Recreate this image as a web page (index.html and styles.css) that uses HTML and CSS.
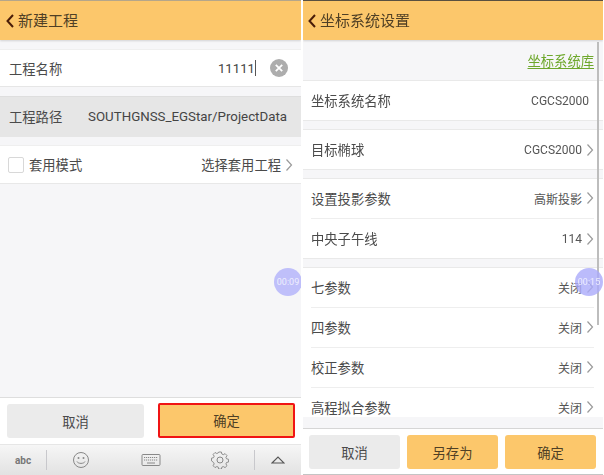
FILE: index.html
```html
<!DOCTYPE html>
<html lang="zh">
<head>
<meta charset="utf-8">
<title>新建工程</title>
<link rel="stylesheet" href="styles.css">
</head>
<body>
<div class="app">
  <section class="panel panel-left">
    <header class="topbar">
      <svg class="back" viewBox="0 0 10 16"><path d="M8 2 2.500 8 8 14" /></svg>
      <h1>新建工程</h1>
    </header>
    <main class="content">
      <div class="row row-name">
        <span class="label">工程名称</span>
        <span class="input-value">11111<i class="caret"></i></span>
        <svg class="clear" viewBox="0 0 18 18"><circle cx="9" cy="9" r="9"/><path d="M5.800 5.800 12.200 12.200M12.200 5.800 5.800 12.200"/></svg>
      </div>
      <div class="row row-path">
        <span class="label">工程路径</span>
        <span class="path">SOUTHGNSS_EGStar/ProjectData</span>
      </div>
      <div class="row row-mode">
        <span class="check"></span>
        <span class="label">套用模式</span>
        <span class="value value-dark">选择套用工程</span>
        <svg class="chev" viewBox="0 0 8 14"><path d="M1.500 1.500 6.500 7 1.500 12.500"/></svg>
      </div>
    </main>
    <footer class="actions actions-left">
      <button class="btn btn-grey">取消</button>
      <button class="btn btn-gold btn-marked">确定</button>
    </footer>
    <nav class="keyboard">
      <span class="kb-abc">abc</span>
      <span class="kb-sep"></span>
      <span class="kb-icons">
        <svg class="kb-icon" viewBox="0 0 18 18"><circle cx="9" cy="9" r="7.500"/><circle cx="6.500" cy="7" r="1" class="solid"/><circle cx="11.500" cy="7" r="1" class="solid"/><path d="M5 10.500c1 2.500 7 2.500 8 0"/></svg>
        <svg class="kb-icon kb-board" viewBox="0 0 20 14"><rect x="1" y="1.500" width="18" height="11" rx="1"/><path d="M3 4.500h14M3 7h14" stroke-dasharray="1.200 .8"/><path d="M6 10h8"/></svg>
        <svg class="kb-icon" viewBox="0 0 18 18"><path d="M7.600 1.500h2.800l.5 2.100 1.500.7 1.900-1.100 2 2-1.100 1.900.6 1.500 2.200.6v2.800l-2.200.5-.6 1.500 1.100 1.900-2 2-1.900-1.100-1.500.6-.5 2.100H7.600l-.5-2.100-1.500-.6-1.900 1.100-2-2 1.100-1.900-.6-1.500L0 10.800V8l2.200-.6.600-1.500L1.700 4l2-2 1.900 1.100 1.500-.7z" transform="translate(.5 -.4) scale(.95)"/><circle cx="9" cy="9" r="3"/></svg>
      </span>
      <span class="kb-sep"></span>
      <svg class="kb-up" viewBox="0 0 14 8"><path d="M1 7 7 1l6 6z"/></svg>
    </nav>
    <span class="timer timer-left">00:09</span>
  </section>

  <section class="panel panel-right">
    <header class="topbar">
      <svg class="back" viewBox="0 0 10 16"><path d="M8 2 2.500 8 8 14" /></svg>
      <h1>坐标系统设置</h1>
    </header>
    <main class="content content-right">
      <div class="scroller">
        <a class="lib-link">坐标系统库</a>
        <div class="group">
          <div class="row"><span class="label">坐标系统名称</span><span class="value value-plain">CGCS2000</span></div>
        </div>
        <div class="group">
          <div class="row"><span class="label">目标椭球</span><span class="value">CGCS2000</span><svg class="chev" viewBox="0 0 8 14"><path d="M1.500 1.500 6.500 7 1.500 12.500"/></svg></div>
        </div>
        <div class="group">
          <div class="row row-line"><span class="label">设置投影参数</span><span class="value">高斯投影</span><svg class="chev" viewBox="0 0 8 14"><path d="M1.500 1.500 6.500 7 1.500 12.500"/></svg></div>
          <div class="row"><span class="label">中央子午线</span><span class="value">114</span><svg class="chev" viewBox="0 0 8 14"><path d="M1.500 1.500 6.500 7 1.500 12.500"/></svg></div>
        </div>
        <div class="group">
          <div class="row row-line"><span class="label">七参数</span><span class="value">关闭</span><svg class="chev" viewBox="0 0 8 14"><path d="M1.500 1.500 6.500 7 1.500 12.500"/></svg></div>
          <div class="row row-line"><span class="label">四参数</span><span class="value">关闭</span><svg class="chev" viewBox="0 0 8 14"><path d="M1.500 1.500 6.500 7 1.500 12.500"/></svg></div>
          <div class="row row-line"><span class="label">校正参数</span><span class="value">关闭</span><svg class="chev" viewBox="0 0 8 14"><path d="M1.500 1.500 6.500 7 1.500 12.500"/></svg></div>
          <div class="row row-line"><span class="label">高程拟合参数</span><span class="value">关闭</span><svg class="chev" viewBox="0 0 8 14"><path d="M1.500 1.500 6.500 7 1.500 12.500"/></svg></div>
        </div>
      </div>
      <span class="scrollbar"></span>
    </main>
    <footer class="actions actions-right">
      <button class="btn btn-grey">取消</button>
      <button class="btn btn-gold">另存为</button>
      <button class="btn btn-gold">确定</button>
    </footer>
    <span class="timer timer-right">00:15</span>
  </section>
</div>
</body>
</html>
```

FILE: styles.css
```css
* { box-sizing: border-box; }
html, body { margin: 0; padding: 0; background: #fff; }
body {
  width: 604px;
  height: 475px;
  overflow: hidden;
  font-family: Roboto, "Noto Sans CJK SC", sans-serif;
  color: #444;
}
.app {
  display: flex;
  width: 604px;
  height: 475px;
  filter: blur(0.35px);
}
.panel {
  position: relative;
  display: flex;
  flex-direction: column;
  height: 475px;
  background: #f6f6f8;
  overflow: hidden;
}
.panel-left {
  width: 301px;
  border-top: 1px solid #b5a68a;
}
.panel-right {
  width: 300px;
  margin-left: 2px;
  border-top: 1px solid #5a5040;
}
.topbar {
  display: flex;
  align-items: center;
  flex: none;
  height: 39px;
  padding-left: 5px;
  background: #fcc76b;
  box-shadow: 0 1px 2px rgba(0, 0, 0, .15);
  position: relative;
  z-index: 1;
}
.panel-right .topbar { padding-left: 4px; }
.topbar h1 {
  margin: 0 0 0 3px;
  font-size: 15px;
  font-weight: 400;
  line-height: 20px;
  color: #4f3f25;
}
.back { width: 10px; height: 16px; }
.back path { fill: none; stroke: #4a1d08; stroke-width: 2; }

.content { flex: 1; min-height: 0; padding-top: 9px; }
.row {
  display: flex;
  align-items: center;
  height: 39px;
  padding: 0 8px 0 9px;
  background: #fff;
  font-size: 13.300px;
}
.label { color: #4a4a4a; white-space: nowrap; }
.row-name {
  height: 38px;
  border-top: 1px solid #efefef;
  border-bottom: 1px solid #e6e6e6;
}
.input-value { margin-left: auto; font-size: 13px; letter-spacing: .1px; color: #444; display: flex; align-items: center; }
.caret { display: block; width: 1px; height: 16px; background: #555; }
.clear { width: 18px; height: 18px; margin: 0 5px 0 14px; flex: none; }
.clear circle { fill: #adadad; }
.clear path { fill: none; stroke: #fff; stroke-width: 1.800; }

.row-path {
  height: 41px;
  margin-top: 9px;
  padding-bottom: 1px;
  background: #e6e6e6;
  border-top: 1px solid #dedede;
}
.path { margin-left: auto; margin-right: 6px; font-size: 13.300px; color: #444; white-space: nowrap; }

.row-mode {
  margin-top: 8px;
  border-top: 1px solid #efefef;
  border-bottom: 1px solid #e8e8e8;
}
.check {
  width: 16px;
  height: 16px;
  margin: 0 5px 0 -1px;
  border: 1px solid #d8d8d8;
  border-radius: 2px;
  background: #fff;
}
.value { margin-left: auto; font-size: 12px; color: #555; white-space: nowrap; }
.value-dark { font-size: 13.300px; color: #4a4a4a; }
.value-plain { margin-right: 5px; }
.chev { width: 8px; height: 14px; margin-left: 4px; flex: none; }
.chev path { fill: none; stroke: #9a9a9a; stroke-width: 1.200; }

.actions { display: flex; flex: none; background: #fff; border-top: 1px solid #dedede; }
.actions-left { height: 47px; padding: 6px 6px 6px 7px; justify-content: space-between; }
.actions-right {
  height: 47px;
  padding: 6px 7px 5px 6px;
  gap: 7px;
  border-top-color: #d6d6d6;
  border-bottom: 1px solid #c4c4c4;
}
.btn {
  font-family: inherit;
  font-size: 13.300px;
  color: #4a4a4a;
  border: 0;
  padding: 0;
  border-radius: 3px;
}
.btn-grey { background: #ebebeb; }
.btn-gold { background: #fcc76b; color: #4f3f25; }
.actions-left .btn { width: 137px; }
.actions-right .btn { flex: 1; }
.btn-marked { border: 2px solid #f01414; border-radius: 2px; margin-top: -1px; }

.keyboard {
  display: flex;
  align-items: center;
  flex: none;
  height: 31px;
  padding: 0 0 0 15px;
  background: linear-gradient(#f6f6f6, #e2e2e2);
  border-top: 1px solid #e6e6e6;
}
.kb-abc { width: 16px; font-size: 10px; font-weight: 700; color: #777; }
.kb-sep { width: 1px; height: 20px; background: #c8c8cc; }
.kb-abc + .kb-sep { margin-left: 15px; }
.kb-icons { display: flex; align-items: center; justify-content: space-between; width: 157px; margin: 0 25px; }
.kb-icon { width: 18px; height: 18px; fill: none; stroke: #888; stroke-width: 1; }
.kb-icon .solid { fill: #888; stroke: none; }
.kb-board { width: 20px; height: 14px; }
.kb-up { width: 14px; height: 8px; margin-left: 16px; fill: none; stroke: #555; stroke-width: 1.100; }

.content-right {
  position: relative;
  display: flex;
  flex-direction: column;
  padding: 0 0 11px;
  overflow: hidden;
}
.scroller { flex: 1; min-height: 0; overflow: hidden; }
.lib-link {
  display: block;
  height: 40px;
  padding: 13px 9px 0 0;
  text-align: right;
  font-size: 13.300px;
  line-height: 18px;
  color: #6ea82c;
  text-decoration: underline;
  text-underline-offset: 2px;
}
.group {
  margin-bottom: 8px;
  background: #fff;
  border-top: 1px solid #e9e9e9;
  border-bottom: 1px solid #e9e9e9;
}
.panel-right .row { padding: 0 9px 0 8px; height: 39px; }
.row-line { position: relative; }
.row-line::after {
  content: "";
  position: absolute;
  left: 8px;
  right: 9px;
  bottom: 0;
  height: 1px;
  background: #eeeeee;
}
.panel-right .row-line { height: 40px; padding-bottom: 2px; }
.scrollbar {
  position: absolute;
  top: 2px;
  right: 4px;
  width: 2px;
  height: 283px;
  background: #bdbdbd;
}
.timer {
  position: absolute;
  top: 267px;
  width: 28px;
  height: 28px;
  border-radius: 50%;
  background: rgba(170, 170, 250, .8);
  color: rgba(255, 255, 255, .75);
  font-size: 9px;
  line-height: 28px;
  text-align: center;
  z-index: 2;
}
.timer-left { left: 274px; background: #bfbffa; }
.timer-right { left: 272px; }
```
